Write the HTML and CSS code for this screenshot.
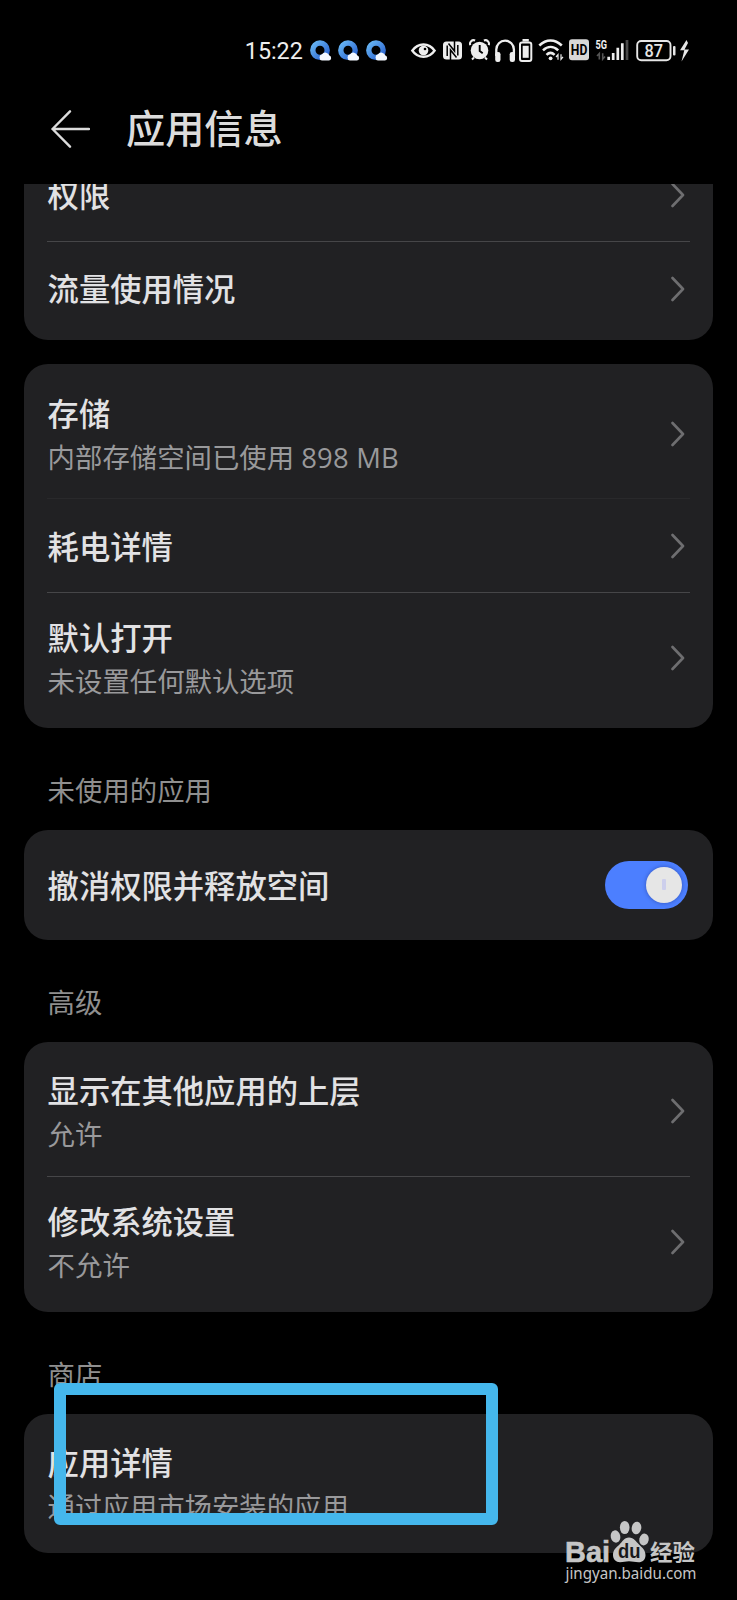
FILE: index.html
```html
<!DOCTYPE html>
<html lang="zh-CN">
<head>
<meta charset="utf-8">
<title>应用信息</title>
<link rel="stylesheet" href="styles.css">
</head>
<body>
<div class="screen">
  <header class="status">
    <svg class="status-icons" viewBox="240 30 460 40" width="460" height="40">
      <defs>
        <linearGradient id="ring" x1="0" y1="0" x2="1" y2="1">
          <stop offset="0" stop-color="#67b5f3"/><stop offset="1" stop-color="#2a62cf"/>
        </linearGradient>
        <g id="browser">
          <circle cx="10" cy="10.2" r="7.2" fill="none" stroke="url(#ring)" stroke-width="5.4"/>
          <path d="M12 20.600a3.300 3.300 0 0 1 0-6.400 4.300 4.300 0 0 1 7.400 1.200 2.700 2.700 0 0 1-.6 5.200z" fill="#f4f8ff"/>
        </g>
      </defs>
      <text class="time" x="244.800" y="58.700" textLength="58" lengthAdjust="spacingAndGlyphs">15:22</text>
      <use href="#browser" x="310" y="40"/>
      <use href="#browser" x="338" y="40"/>
      <use href="#browser" x="366" y="40"/>
      <!-- eye -->
      <path d="M412.300 50.600C418 42.300 429 42.300 434.600 50.600C429 58.800 418 58.800 412.300 50.600Z" fill="none" stroke="#eee" stroke-width="2.500"/>
      <circle cx="423.500" cy="50.500" r="4.800" fill="#eee"/><circle cx="425" cy="49" r="1.300" fill="#000"/>
      <!-- NFC -->
      <rect x="443" y="41.500" width="19" height="18" rx="3.500" fill="#eee"/>
      <path d="M447.200 56V45.500M450.500 60V50L456.500 57.500M448.500 43.500L454.500 51V41M457.800 45V55.500" fill="none" stroke="#000" stroke-width="1.500"/>
      <!-- alarm -->
      <circle cx="479.500" cy="50.500" r="8.800" fill="#eee"/>
      <path d="M470.300 45.200a3.600 3.600 0 0 1 4.800-4.700M488.700 45.200a3.600 3.600 0 0 0-4.800-4.700M474 57.500l-2 2M485 57.500l2 2" fill="none" stroke="#eee" stroke-width="2"/>
      <path d="M479.700 45v6l3 2.300" fill="none" stroke="#000" stroke-width="1.900"/>
      <!-- headphones -->
      <path d="M496.300 56v-6.500a8.800 8.800 0 0 1 17.600 0V56" fill="none" stroke="#eee" stroke-width="2.300"/>
      <rect x="495.200" y="52" width="5.300" height="10" rx="2.300" fill="#eee"/><rect x="509.700" y="52" width="5.300" height="10" rx="2.300" fill="#eee"/>
      <!-- accessory battery -->
      <rect x="520" y="42.600" width="11.300" height="18.300" rx="2" fill="none" stroke="#eee" stroke-width="2"/>
      <rect x="522.700" y="45.800" width="6" height="12" fill="#eee"/><rect x="522.500" y="39" width="6.300" height="2.600" fill="#eee"/>
      <!-- wifi -->
      <path d="M539.300 45.500C546.300 38.700 554.800 38.700 561.800 45.500M543 50.300C547.700 45.800 553.500 45.800 558.200 50.300M546.500 54.900C549 52.400 552 52.400 554.600 54.900" fill="none" stroke="#eee" stroke-width="2.500"/>
      <circle cx="550.600" cy="58.300" r="1.900" fill="#eee"/>
      <path d="M556 57l2-2.300v5M563 56.800l-2 2.500v-5" fill="none" stroke="#eee" stroke-width="1.200"/>
      <!-- HD -->
      <rect x="569" y="39.300" width="20" height="21" rx="3" fill="#d8d8d8"/>
      <text class="hd" x="570.800" y="54.800" textLength="16.500" lengthAdjust="spacingAndGlyphs">HD</text>
      <!-- 5G signal -->
      <text class="net" x="595.500" y="48.600" textLength="11.500" lengthAdjust="spacingAndGlyphs">5G</text>
      <path d="M597 56l2.300-2.500v6M605 56.500l-2.300 2.700v-6" fill="none" stroke="#555" stroke-width="1.600"/>
      <path d="M608.700 60v-3.300M613.200 60v-7M617.800 60V47.800M622.300 60V43.300" stroke="#eee" stroke-width="2.700"/>
      <path d="M627 60V40" stroke="#4a4a4a" stroke-width="2.700"/>
      <!-- battery -->
      <rect x="637.200" y="41" width="33.300" height="19.300" rx="4" fill="none" stroke="#e6e6e6" stroke-width="1.900"/>
      <rect x="673" y="46" width="2.500" height="9.500" rx="1" fill="#e6e6e6"/>
      <text class="pct" x="644.500" y="57" textLength="18.500" lengthAdjust="spacingAndGlyphs">87</text>
      <path d="M686.500 40L680 50.300h4.300L681.500 61.500 689 49.500h-4.500L688 43z" fill="#e6e6e6"/>
    </svg>
  </header>

  <div class="titlebar">
    <svg class="back" width="40" height="40" viewBox="0 0 40 40"><path d="M20 2.300L2.500 20 20 37.700M2.500 20H39"/></svg>
    <h1>应用信息</h1>
  </div>

  <main class="list">
    <section class="card card-cut">
      <div class="row"><div class="name">权限</div><svg class="chev" viewBox="0 0 14 26"><path d="M1.500 2L12 13 1.500 24"/></svg></div>
      <div class="row"><div class="name">流量使用情况</div><svg class="chev" viewBox="0 0 14 26"><path d="M1.500 2L12 13 1.500 24"/></svg></div>
    </section>

    <section class="card card-storage">
      <div class="row tall faint"><div><div class="name">存储</div><div class="sub">内部存储空间已使用 <span class="latin">898 MB</span></div></div><svg class="chev" viewBox="0 0 14 26"><path d="M1.500 2L12 13 1.500 24"/></svg></div>
      <div class="row"><div class="name">耗电详情</div><svg class="chev" viewBox="0 0 14 26"><path d="M1.500 2L12 13 1.500 24"/></svg></div>
      <div class="row tall"><div><div class="name">默认打开</div><div class="sub">未设置任何默认选项</div></div><svg class="chev" viewBox="0 0 14 26"><path d="M1.500 2L12 13 1.500 24"/></svg></div>
    </section>

    <h2>未使用的应用</h2>
    <section class="card">
      <div class="row switch-row"><div class="name">撤消权限并释放空间</div><div class="switch"><div class="knob"></div></div></div>
    </section>

    <h2>高级</h2>
    <section class="card card-advanced">
      <div class="row tall"><div><div class="name">显示在其他应用的上层</div><div class="sub">允许</div></div><svg class="chev" viewBox="0 0 14 26"><path d="M1.500 2L12 13 1.500 24"/></svg></div>
      <div class="row tall"><div><div class="name">修改系统设置</div><div class="sub">不允许</div></div><svg class="chev" viewBox="0 0 14 26"><path d="M1.500 2L12 13 1.500 24"/></svg></div>
    </section>

    <h2>商店</h2>
    <section class="card card-store">
      <div class="row tall"><div><div class="name">应用详情</div><div class="sub">通过应用市场安装的应用</div></div></div>
    </section>
  </main>

  <div class="marker"></div>
  <svg class="watermark" width="140" height="70" viewBox="560 1515 140 70">
    <text class="wm-bai" x="565" y="1561.500" textLength="45" lengthAdjust="spacingAndGlyphs">Bai</text>
    <ellipse cx="615.500" cy="1536.500" rx="4.800" ry="6.200" transform="rotate(-12 615.500 1536.500)"/>
    <ellipse cx="624.700" cy="1527.500" rx="4.800" ry="6.600"/>
    <ellipse cx="636.500" cy="1528" rx="4.800" ry="6.300" transform="rotate(10 636.500 1528)"/>
    <ellipse cx="644" cy="1539.500" rx="4.700" ry="6" transform="rotate(12 644 1539.500)"/>
    <path d="M629 1537.500c-5 0-6.500 4-9.500 7-3.500 3.300-6.500 5.500-6.500 10.500 0 4.500 3 7.200 7 7.200 3.500 0 5.500-1 9-1s6 1 9.500 1c4 0 7-2.500 7-7 0-5-3-7.200-6.500-10.700-3-3-5-7-10-7z"/>
    <text class="wm-du" x="618" y="1558" textLength="22.500" lengthAdjust="spacingAndGlyphs">du</text>
    <text class="wm-cn" x="650" y="1559.500" textLength="45" lengthAdjust="spacingAndGlyphs">经验</text>
    <text class="wm-url" x="565.500" y="1578.500" textLength="131" lengthAdjust="spacingAndGlyphs">jingyan.baidu.com</text>
  </svg>
</div>
</body>
</html>
```
FILE: styles.css
```css
* { box-sizing: border-box; }
body {
  margin: 0;
  background: #000;
  font-family: "Noto Sans CJK SC", sans-serif;
  color: #e2e2e4;
}
.screen {
  position: relative;
  width: 737px;
  height: 1600px;
  overflow: hidden;
  background: #000;
}
.status { height: 74px; padding: 30px 0 0 240px; }
.status-icons { display: block; }
.time { font: 24px Roboto, sans-serif; fill: #eee; }
.hd { font: bold 15px Roboto, sans-serif; fill: #000; }
.net { font: bold 12px Roboto, sans-serif; fill: #eee; }
.pct { font: 500 19px Roboto, sans-serif; fill: #e6e6e6; }

.titlebar {
  display: flex;
  align-items: center;
  gap: 36px;
  height: 110px;
  padding-left: 50px;
}
.back { fill: none; stroke: #dcdcdc; stroke-width: 2.4; stroke-linecap: round; stroke-linejoin: round; }
h1 { margin: 0; padding-bottom: 6px; font-size: 39.2px; line-height: 58px; font-weight: 500; color: #dcdcdc; }

.list { padding: 0 24px; }
.card {
  padding: 5px 23px;
  border-radius: 24px;
  background: #212123;
  overflow: hidden;
}
.card-cut { height: 156px; padding-top: 0; border-radius: 0 0 24px 24px; }
.card-cut .row:first-child { margin-top: -36px; }
.card-cut .name { padding-bottom: 2px; }
.card-storage { height: 364px; margin-top: 24px; }
.row {
  display: flex;
  align-items: center;
  justify-content: space-between;
  height: 94px;
  padding: 0 5px 0 .6px;
  border-bottom: 1px solid #464648;
}
.row.faint { border-color: #29292b; }
.row:last-child { border-bottom-color: transparent; }
.row.tall { height: 130px; }
.row.switch-row { height: 100px; padding-right: 2px; }
.name { font-size: 31.3px; line-height: 46px; font-weight: 500; white-space: nowrap; }
.sub { padding-bottom: 2px; font-size: 27.4px; line-height: 40px; color: #99999b; white-space: nowrap; }
.latin { margin-left: 1px; font-family: "Open Sans", sans-serif; letter-spacing: .2px; line-height: 1; }
.chev { width: 14px; height: 26px; fill: none; stroke: #6e6e70; stroke-width: 2.6; stroke-linecap: round; stroke-linejoin: round; }
.card-advanced { height: 270px; padding-top: 4px; }
.card-advanced .row.tall { height: 131px; }
.card-store { height: 139px; padding-top: 4px; }
h2 {
  margin: 0;
  height: 102px;
  padding: 41px 0 0 23.6px;
  font-size: 27.4px;
  line-height: 40px;
  font-weight: 400;
  color: #8f8f8f;
}
.switch {
  display: flex;
  align-items: center;
  justify-content: flex-end;
  width: 83px;
  height: 48px;
  padding-right: 6px;
  border-radius: 24px;
  background: #4c7fff;
}
.knob {
  display: grid;
  place-items: center;
  width: 36px;
  height: 36px;
  border-radius: 50%;
  background: #e6e6e6;
  box-shadow: 0 0 4px rgba(0, 0, 60, .35);
}
.knob::after { content: ""; width: 4px; height: 11px; border-radius: 1px; background: #cdcfec; }

.marker {
  position: absolute;
  left: 54px;
  top: 1382.5px;
  width: 444px;
  height: 142.5px;
  border: 12px solid #45b7ec;
  border-radius: 6px;
}
.watermark { position: absolute; left: 560px; top: 1515px; fill: #c6c6c6; }
.wm-bai { font: bold 30px "Liberation Sans", sans-serif; stroke: #c6c6c6; stroke-width: .6; }
.wm-du { font: bold 20px "Liberation Sans", sans-serif; fill: #19191b; }
.wm-cn { font: bold 22px "Noto Sans CJK SC", sans-serif; }
.wm-url { font: 16.5px "Noto Sans", sans-serif; }
```
